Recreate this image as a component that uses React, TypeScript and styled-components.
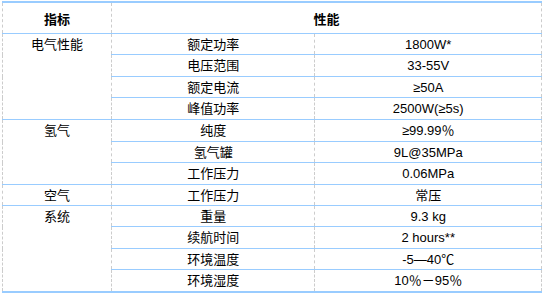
import React from "react";
import styled, { createGlobalStyle } from "styled-components";

const GlobalStyle = createGlobalStyle`
  body {
    margin: 0;
    background: #fff;
  }
`;

const Page = styled.div`
  padding: 1px 0 0 2px;
`;

const Table = styled.table`
  width: 540px;
  border-collapse: collapse;
  border-top: 2px solid #99ccff;
  border-bottom: 2px solid #99ccff;
  border-left: 1px dashed #cccccc;
  border-right: 1px dashed #cccccc;
  font-family: "Liberation Sans", "Noto Sans CJK SC", sans-serif;
  font-size: 13px;
  color: #000;
`;

const HeadCell = styled.th`
  height: 30px;
  padding: 0;
  font-weight: bold;
  text-align: center;
  vertical-align: middle;
  border-bottom: 1px solid #99ccff;
  border-left: 1px dashed #cccccc;
`;

const Row = styled.tr<{ $tall?: boolean }>`
  height: ${(p) => (p.$tall ? "22px" : "21px")};
`;

const Cell = styled.td<{ $top?: boolean }>`
  padding: 0;
  text-align: center;
  vertical-align: ${(p) => (p.$top ? "top" : "middle")};
  padding-top: ${(p) => (p.$top ? "3px" : "0")};
  border-top: 1px solid #99ccff;
  border-left: 1px dashed #cccccc;
  line-height: 15px;
  white-space: nowrap;
`;

type Group = { name: string; items: [string, string][] };

const groups: Group[] = [
  {
    name: "电气性能",
    items: [
      ["额定功率", "1800W*"],
      ["电压范围", "33-55V"],
      ["额定电流", "≥50A"],
      ["峰值功率", "2500W(≥5s)"],
    ],
  },
  {
    name: "氢气",
    items: [
      ["纯度", "≥99.99％"],
      ["氢气罐", "9L@35MPa"],
      ["工作压力", "0.06MPa"],
    ],
  },
  { name: "空气", items: [["工作压力", "常压"]] },
  {
    name: "系统",
    items: [
      ["重量", "9.3 kg"],
      ["续航时间", "2 hours**"],
      ["环境温度", "-5—40℃"],
      ["环境湿度", "10％－95％"],
    ],
  },
];

const tallRows = [1, 3, 4, 6, 9, 11];

export default function App() {
  let index = 0;
  return (
    <Page>
      <GlobalStyle />
      <Table>
        <colgroup>
          <col style={{ width: 109 }} />
          <col style={{ width: 204 }} />
          <col style={{ width: 227 }} />
        </colgroup>
        <thead>
          <tr>
            <HeadCell>指标</HeadCell>
            <HeadCell colSpan={2}>性能</HeadCell>
          </tr>
        </thead>
        <tbody>
          {groups.map((g) =>
            g.items.map(([label, value], i) => {
              const n = index++;
              return (
                <Row key={n} $tall={tallRows.includes(n)}>
                  {i === 0 && (
                    <Cell $top rowSpan={g.items.length}>
                      {g.name}
                    </Cell>
                  )}
                  <Cell>{label}</Cell>
                  <Cell>{value}</Cell>
                </Row>
              );
            })
          )}
        </tbody>
      </Table>
    </Page>
  );
}
